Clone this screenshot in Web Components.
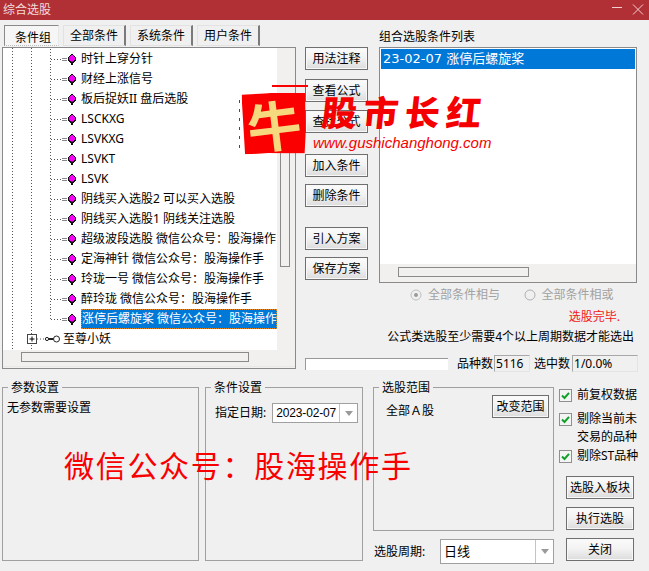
<!DOCTYPE html>
<html lang="zh"><head><meta charset="utf-8"><title>综合选股</title>
<style>
html,body{margin:0;padding:0;background:#f0f0f0}
body{width:649px;height:571px;overflow:hidden;font:12px/16px "Noto Sans","Noto Sans CJK SC",sans-serif;color:#000}
</style></head><body>
<dialog-window>
  <title-bar slot="title">综合选股</title-bar>
  <tab-strip slot="tabs"><tab-item active>条件组</tab-item><tab-item>全部条件</tab-item><tab-item>系统条件</tab-item><tab-item>用户条件</tab-item></tab-strip>
  <tree-view slot="tree">
    <tree-row>时针上穿分针</tree-row>
    <tree-row>财经上涨信号</tree-row>
    <tree-row>板后捉妖II 盘后选股</tree-row>
    <tree-row>LSCKXG</tree-row>
    <tree-row>LSVKXG</tree-row>
    <tree-row>LSVKT</tree-row>
    <tree-row>LSVK</tree-row>
    <tree-row>阴线买入选股2 可以买入选股</tree-row>
    <tree-row>阴线买入选股1 阴线关注选股</tree-row>
    <tree-row>超级波段选股 微信公众号：股海操作</tree-row>
    <tree-row>定海神针 微信公众号：股海操作手</tree-row>
    <tree-row>玲珑一号 微信公众号：股海操作手</tree-row>
    <tree-row>醉玲珑 微信公众号：股海操作手</tree-row>
    <tree-row last selected>涨停后螺旋桨 微信公众号：股海操作</tree-row>
    <tree-row group>至尊小妖</tree-row>
  </tree-view>
  <button-column slot="buttons">
    <ui-button style="margin-top:0">用法注释</ui-button>
    <ui-button style="margin-top:9px">查看公式</ui-button>
    <ui-button style="margin-top:8px">查找公式</ui-button>
    <ui-button style="margin-top:21px">加入条件</ui-button>
    <ui-button style="margin-top:7px">删除条件</ui-button>
    <ui-button style="margin-top:20px">引入方案</ui-button>
    <ui-button style="margin-top:7px">保存方案</ui-button>
  </button-column>
  <condition-list slot="list" heading="组合选股条件列表">23-02-07 涨停后螺旋桨</condition-list>
  <status-panel slot="status"></status-panel>
  <group-box slot="g1" legend="参数设置" style="height:174px"><div style="padding:4px 0">无参数需要设置</div></group-box>
  <group-box slot="g2" legend="条件设置" style="height:174px"><date-row></date-row></group-box>
  <range-column slot="g3"></range-column>
  <option-column slot="g4"></option-column>
</dialog-window>
<brand-mark></brand-mark>
<script>
const base=`:host,*{box-sizing:border-box}`;
function def(name,html){
  customElements.define(name,class extends HTMLElement{
    constructor(){super();const r=this.attachShadow({mode:'open'});r.innerHTML=(typeof html==='function'?html(this):html);}
  });
}
def('dialog-window',`<style>${base}
:host{display:block;width:649px;height:571px}
.top{display:grid;grid-template-columns:303px 74px 258px;grid-template-rows:263px 97px;height:360px;padding-left:2px}
.left{grid-row:1/3;padding-top:5px;display:flex;flex-direction:column}
.btn{padding-top:27px}
.st{grid-column:2/4}
.bottom{display:grid;grid-template-columns:203px 168px 186px 90px;height:191px;padding:7px 0 0 2px}
.g1{width:197px}.g2{width:158px}
</style>
<slot name="title"></slot>
<div class="top">
 <div class="left"><slot name="tabs"></slot><slot name="tree"></slot></div>
 <div class="btn"><slot name="buttons"></slot></div>
 <div><slot name="list"></slot></div>
 <div class="st"><slot name="status"></slot></div>
</div>
<div class="bottom">
 <div class="g1"><slot name="g1"></slot></div>
 <div class="g2"><slot name="g2"></slot></div>
 <div><slot name="g3"></slot></div>
 <div><slot name="g4"></slot></div>
</div>`);
def('title-bar',`<style>${base}
:host{display:flex;align-items:center;justify-content:space-between;height:20px;background:#b03035;color:#f3dcdc;padding:0 4px 0 3px;font-size:12px;line-height:18px}
svg{display:block}
</style><span><slot></slot></span>
<svg width="34" height="12" viewBox="0 0 34 12" fill="none" stroke="#f2d0d0" stroke-width="1"><path d="M1 3.5H11M22 .5 32 10.5M32 .5 22 10.5"/></svg>`);
def('tab-strip',`<style>${base}:host{display:flex;height:22px;padding-left:2px;gap:4px}</style><slot></slot>`);
def('tab-item',`<style>${base}
:host{display:block;width:63px;height:21px;border:1px solid #e2e2e2;border-right:2px solid #7a7a7a;background:#f0f0f0;text-align:center;line-height:20px;white-space:nowrap}
:host([active]){width:55px;border:1px solid #8a8a8a;border-right-color:#e8e8e8;border-bottom:1px dotted #bbb;background:#f6f6f6;padding-top:2px;padding-left:3px}
</style><slot></slot>`);
def('tree-view',`<style>${base}
:host{display:grid;grid-template-columns:274px 18px;grid-template-rows:302px 18px;width:294px;height:322px;border:1px solid #8a8a8a;background:#f1f0ef}
.v{overflow:hidden;background-color:#fff;padding-top:1px;
background-image:repeating-linear-gradient(#555 0 1px,transparent 1px 3px),repeating-linear-gradient(#555 0 1px,transparent 1px 3px);
background-size:1px 100%,1px 100%;background-position:9px 0,28px 0;background-repeat:no-repeat}
.vt{padding:0 3px}
.thumb{margin-top:52px;height:167px;border:1px solid #8a8a8a;width:10px;background:#f1f0ef}
.ht{grid-column:1/3;padding:2px 0 0 18px;border-bottom:1px solid #e8e8e8;margin-bottom:1px}
.hth{width:228px;height:10px;border:1px solid #8a8a8a}
</style>
<div class="v"><slot></slot></div><div class="vt"><div class="thumb"></div></div>
<div class="ht"><div class="hth"></div></div>`);
def('tree-row',(h)=>{
 const g=h.hasAttribute('group'),last=h.hasAttribute('last');
 const s=g?`<svg width="60" height="20" viewBox="0 0 60 20"><rect x="24.5" y="5.5" width="9" height="9" fill="#fff" stroke="#444"/><path d="M26.5 10H31.5M29 7.5V12.5" stroke="#000"/><path d="M34 10H41" stroke="#555" stroke-dasharray="1 2"/><circle cx="44" cy="10" r="1.6" fill="none" stroke="#222"/><path d="M45.5 10H50.5" stroke="#222" stroke-width="2"/><circle cx="53.5" cy="10" r="3" fill="#fff" stroke="#222"/></svg>`
 :`<svg width="78" height="20" viewBox="0 0 78 20" shape-rendering="crispEdges"><path d="M47.5 0V${last?10:20}" stroke="#555" stroke-dasharray="1 2"/><path d="M48 10.5H59" stroke="#555" stroke-dasharray="1 2"/><path d="M59 9.5H64M59 11.5H64" stroke="#888"/><path d="M68 5H70V6H71V7H72V8H73V12H72V13H71V14H70V16H68V14H67V13H66V12H65V8H66V7H67V6H68Z" fill="#111"/><path d="M69 6H70V7H71V8H72V11H71V12H70V13H68V12H67V11H66V8H67V7H68V6Z" fill="#f500f5"/><path d="M68 12H70V13H68Z" fill="#a000a0"/></svg>`;
 return `<style>${base}
:host{display:flex;height:20px;align-items:center;white-space:nowrap;overflow:hidden}
svg{display:block;flex:none}
.t{line-height:20px;height:20px}
:host([selected]) .t{flex:1;min-width:0;overflow:hidden;background:#0078d7;color:#fff;outline:1px dotted #e08a20;outline-offset:-1px;padding-left:1px}
</style>${s}<span class="t"><slot></slot></span>`;});
def('button-column',`<style>${base}:host{display:flex;flex-direction:column;width:63px}</style><slot></slot>`);
def('ui-button',`<style>${base}
:host{display:block;height:23px;width:100%;border:1px solid #6f6f6f;background:linear-gradient(#fbfbfb,#f3f3f3 45%,#dcdcdc);box-shadow:inset 0 0 0 1px #f8f8f8;text-align:center;line-height:21px;white-space:nowrap;font-size:12px}
</style><slot></slot>`);
def('condition-list',(h)=>`<style>${base}
:host{display:flex;flex-direction:column;height:263px}
.h{height:27px;padding-top:9px;line-height:16px}
.box{width:258px;height:236px;border:1px solid #8a8a8a;background:#fff;display:flex;flex-direction:column;padding-top:1px}
.sel{margin:0 1px;height:20px;background:#0078d7;color:#fff;font:13px/20px "DejaVu Sans","Noto Sans CJK SC",sans-serif;padding-left:2px;white-space:nowrap}
.sp{flex:1}
.ht{height:18px;background:#f1f0ef;padding:3px 0 0 18px}
.hth{width:131px;height:10px;border:1px solid #8a8a8a}
</style><div class="h">${h.getAttribute('heading')}</div><div class="box"><div class="sel"><slot></slot></div><div class="sp"></div><div class="ht"><div class="hth"></div></div></div>`);
def('status-panel',`<style>${base}
:host{display:flex;flex-direction:column;width:332px}
.rad{display:flex;height:24px;padding-left:105px;align-items:center;color:#a2a2a2}
.r{display:flex;align-items:center;gap:6px;width:117px}
svg{display:block;flex:none}
.done{text-align:right;color:#f01818;padding-right:17px;height:20px;line-height:20px}
.note{text-align:right;padding-right:3px;height:20px;line-height:20px;white-space:nowrap}
.bar{display:flex;align-items:center;margin-top:8px;height:17px;white-space:nowrap}
.bar span{flex:none}
.p{width:143px;height:12px;background:#fff;border-top:1px solid #999;border-left:1px solid #999;margin-right:9px;flex:none}
.f{flex:none;height:17px;border:1px solid;border-color:#a8a8a8 #e4e4e4 #e4e4e4 #a8a8a8;line-height:16px;padding-left:1px}
</style>
<div class="rad"><span class="r"><svg width="12" height="12" viewBox="0 0 12 12"><circle cx="6" cy="6" r="5" fill="#f0f0f0" stroke="#c0c0c0"/><circle cx="6" cy="6" r="2" fill="#9a9a9a"/></svg>全部条件相与</span><span class="r"><svg width="12" height="12" viewBox="0 0 12 12"><circle cx="6" cy="6" r="5" fill="#f0f0f0" stroke="#b0b0b0"/></svg>全部条件相或</span></div>
<div class="done">选股完毕.</div>
<div class="note">公式类选股至少需要4个以上周期数据才能选出</div>
<div class="bar"><div class="p"></div><span>品种数</span><div class="f" style="width:36px;margin:0 4px 0 1px">5116</div><span>选中数</span><div class="f" style="width:66px;margin-left:2px">1/0.0%</div></div>`);
def('group-box',(h)=>`<style>${base}
:host{display:block;border:1px solid #a0a0a0;padding:0 4px}
.l{display:block;width:fit-content;margin:-8px 0 0 1px;padding:0 3px;background:#f0f0f0;height:16px;line-height:16px;white-space:nowrap}
</style><div class="l">${h.getAttribute('legend')}</div><slot></slot>`);
def('combo-box',`<style>${base}
:host{display:flex;height:20px;border:1px solid #a0a0a0;background:#fff}
.v{flex:1;padding-left:3px;white-space:nowrap;overflow:hidden;line-height:inherit}
.a{flex:none;width:18px;border-left:1px solid #c4c4c4;display:flex;align-items:center;justify-content:center}
svg{display:block}
</style><div class="v"><slot></slot></div><div class="a"><svg width="8" height="5" viewBox="0 0 8 5"><path d="M0 0H8L4 5Z" fill="#9a9a9a"/></svg></div>`);
def('date-row',`<style>${base}
:host{display:flex;align-items:center;gap:6px;margin:7px 0 0 5px}
span{flex:none;white-space:nowrap}
combo-box{flex:none;width:86px;font:12px/18px "Liberation Sans",sans-serif;letter-spacing:-.15px}
</style><span>指定日期:</span><combo-box>2023-02-07</combo-box>`);
def('range-column',`<style>${base}
:host{display:flex;flex-direction:column;width:181px}
group-box{height:144px}
.in{display:flex;justify-content:space-between;padding-left:8px;margin-top:-1px}
.in span{padding-top:8px}
ui-button{width:57px}
.per{display:flex;align-items:center;margin-top:8px;padding-left:1px}
.per span{width:66px;flex:none}
combo-box{width:114px;height:25px;line-height:23px;font-size:13px}
</style><group-box legend="选股范围"><div class="in"><span>全部Ａ股</span><ui-button>改变范围</ui-button></div></group-box>
<div class="per"><span>选股周期:</span><combo-box>日线</combo-box></div>`);
def('check-row',`<style>${base}
:host{display:flex;gap:5px;line-height:18px;white-space:nowrap}
svg{display:block;flex:none;margin-top:3px}
</style><svg width="13" height="13" viewBox="0 0 13 13"><rect x=".5" y=".5" width="12" height="12" fill="#f4f4f4" stroke="#8f8f8f"/><path d="M3 6.5 5.5 9 10 3.8" fill="none" stroke="#12a02a" stroke-width="2"/></svg><span><slot></slot></span>`);
def('option-column',`<style>${base}
:host{display:flex;flex-direction:column;width:88px;margin-top:-1px}
ui-button{width:68px;margin-left:7px}
</style>
<check-row style="margin-bottom:6px">前复权数据</check-row>
<check-row style="margin-bottom:1px">剔除当前未<br>交易的品种</check-row>
<check-row style="margin-bottom:11px">剔除ST品种</check-row>
<ui-button>选股入板块</ui-button>
<ui-button style="margin-top:8px">执行选股</ui-button>
<ui-button style="margin-top:8px">关闭</ui-button>`);
def('brand-mark',`<style>${base}
:host{position:absolute;left:0;top:0;width:649px;height:571px;pointer-events:none;display:block}
.seal{position:absolute;left:242px;top:93px;width:64px;height:61px;background:#fb0000;transform:rotate(-1deg);clip-path:polygon(0 2%,45% 0,100% 1%,99% 70%,97% 100%,40% 98%,4% 100%);display:flex;align-items:center;justify-content:center}
.seal span{display:block;font:700 54px/58px "Noto Sans CJK SC",sans-serif;color:#f6d97f;transform:rotate(-6deg)}
.stk{position:absolute;left:272px;top:85px;width:36px;height:2px;background:#fb0000}
.stk2{position:absolute;left:239px;top:100px;width:1px;height:50px;background:repeating-linear-gradient(#fb0000 0 3px,transparent 3px 9px)}
.cn{position:absolute;left:322px;top:87px;font:900 35px/48px "Noto Sans CJK SC",sans-serif;color:#f50000;letter-spacing:6.5px;white-space:nowrap;transform:skewX(-6deg)}
.url{position:absolute;left:313px;top:133px;font:italic 400 15px/20px "Liberation Sans",sans-serif;color:#f50000;white-space:nowrap}
.wx{position:absolute;left:64px;top:442px;font:400 30px/44px "Noto Sans CJK SC",sans-serif;color:#f80000;letter-spacing:1.7px;white-space:nowrap}
</style><div class="stk"></div><div class="stk2"></div><div class="seal"><span>牛</span></div><div class="cn">股市长红</div><div class="url">www.gushichanghong.com</div><div class="wx">微信公众号：股海操作手</div>`);
</script></body></html>
